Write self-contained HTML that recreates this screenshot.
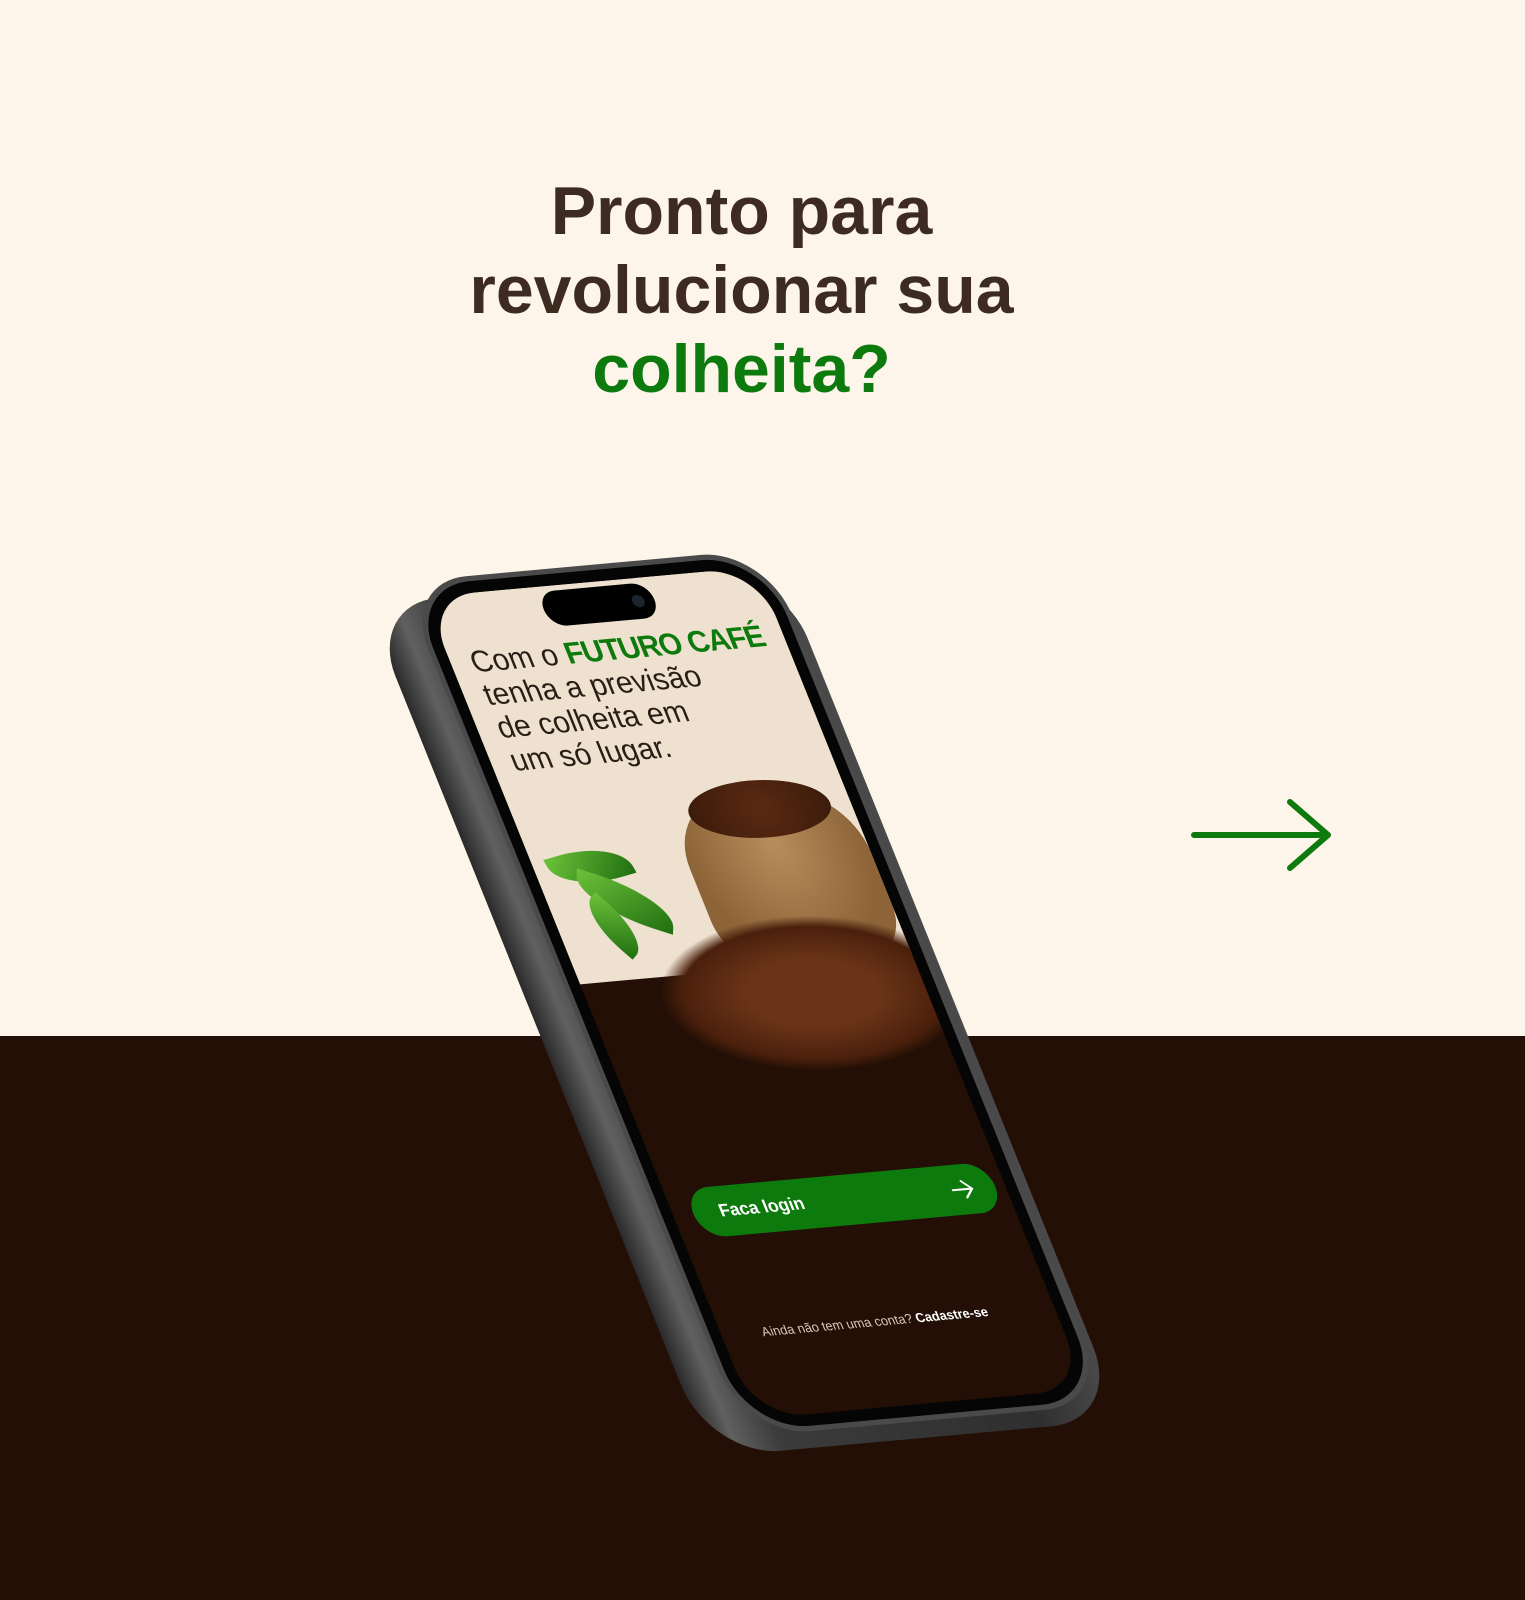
<!DOCTYPE html>
<html><head><meta charset="utf-8"><style>
*{margin:0;padding:0;box-sizing:border-box}
body{width:1525px;height:1600px;overflow:hidden;background:#fdf5ea;position:relative;font-family:"Liberation Sans",sans-serif}
.dark{position:absolute;left:0;top:1036px;width:1525px;height:564px;background:#230f05}
h1{position:absolute;left:0;top:172px;width:1483px;text-align:center;font-size:68px;line-height:79px;font-weight:bold;color:#3d2b22}
h1 .g{color:#0d7a0d}
.ph{position:absolute;left:0;top:0;width:330px;height:800px;transform-origin:0 0;transform:matrix(1.006,-0.091,0.414,1.0275,424,597)}
.back{position:absolute;left:-58px;top:2px;width:410px;height:830px;border-radius:70px;background:linear-gradient(90deg,#2a2a2a,#606060 7%,#3b3b3b 18%,#2f2f2f 80%,#4a4a4a);}
.frame{position:absolute;left:-16px;top:-16px;width:362px;height:832px;border-radius:64px;background:#4a4a4a;padding:5px}
.frame>div{width:100%;height:100%;border-radius:60px;background:#050505}
.scr{position:absolute;left:0;top:0;width:330px;height:800px;border-radius:50px;overflow:hidden;background:#230f05}
.beige{position:absolute;left:0;top:0;width:330px;height:377px;background:#efe1d0}
.notch{position:absolute;left:110px;top:5px;width:110px;height:34px;border-radius:17px;background:#000}
.notch:after{content:"";position:absolute;right:10px;top:11px;width:12px;height:12px;border-radius:50%;background:#1c2430}
.txt{position:absolute;left:20px;top:50px;font-size:29px;line-height:32px;color:#2a1d15}
.txt b{color:#0d7a0d;font-weight:bold;letter-spacing:-1px}
.bag{position:absolute;left:150px;top:210px;width:180px;height:170px;border-radius:40% 40% 30% 30%;background:radial-gradient(ellipse at 50% 30%,#b88d5c,#8c6438 70%)}
.beans{position:absolute;left:170px;top:200px;width:140px;height:55px;border-radius:50%;background:radial-gradient(circle,#5a2a12,#3a1a0a)}
.pile{position:absolute;left:70px;top:330px;width:300px;height:150px;border-radius:50%;background:radial-gradient(ellipse,#6b3418 30%,#4a200c 60%,rgba(35,15,5,0) 70%)}
.leaf{position:absolute;background:linear-gradient(135deg,#6cc23a,#1f6e10);border-radius:0 80% 0 80%}
.btn{position:absolute;left:20px;top:578px;width:300px;height:48px;border-radius:24px;background:#0d7a0d;color:#fff;font-weight:bold;font-size:17px;line-height:48px;padding-left:26px}
.btn svg{position:absolute;right:20px;top:13px}
.foot{position:absolute;left:40px;top:712px;font-size:12.5px;color:#d8c9bd;white-space:nowrap}
.foot b{color:#fff}
</style></head><body>
<div class="dark"></div>
<h1>Pronto para<br>revolucionar sua<br><span class="g">colheita?</span></h1>
<svg style="position:absolute;left:1190px;top:798px" width="145" height="74" viewBox="0 0 145 74"><path d="M4 37H138M100 4L138 37L100 70" fill="none" stroke="#0d7a0d" stroke-width="6" stroke-linecap="round" stroke-linejoin="round"/></svg>
<div class="ph">
<div class="back"></div>
<div class="frame"><div></div></div>
<div class="scr">
<div class="beige"></div>
<div class="notch"></div>
<div class="txt">Com o <b>FUTURO CAFÉ</b><br>tenha a previsão<br>de colheita em<br>um só lugar.</div>
<div class="leaf" style="left:15px;top:250px;width:80px;height:34px;transform:rotate(-10deg)"></div>
<div class="leaf" style="left:30px;top:285px;width:90px;height:36px;transform:rotate(25deg)"></div>
<div class="leaf" style="left:25px;top:310px;width:60px;height:30px;transform:rotate(55deg)"></div>
<div class="bag"></div>
<div class="beans"></div>
<div class="pile"></div>
<div class="btn">Faca login<svg width="24" height="22" viewBox="0 0 24 22"><path d="M2 11H21M13 3L21 11L13 19" fill="none" stroke="#fff" stroke-width="2" stroke-linecap="round"/></svg></div>
<div class="foot">Ainda não tem uma conta? <b>Cadastre-se</b></div>
</div>
</div>
</body></html>
